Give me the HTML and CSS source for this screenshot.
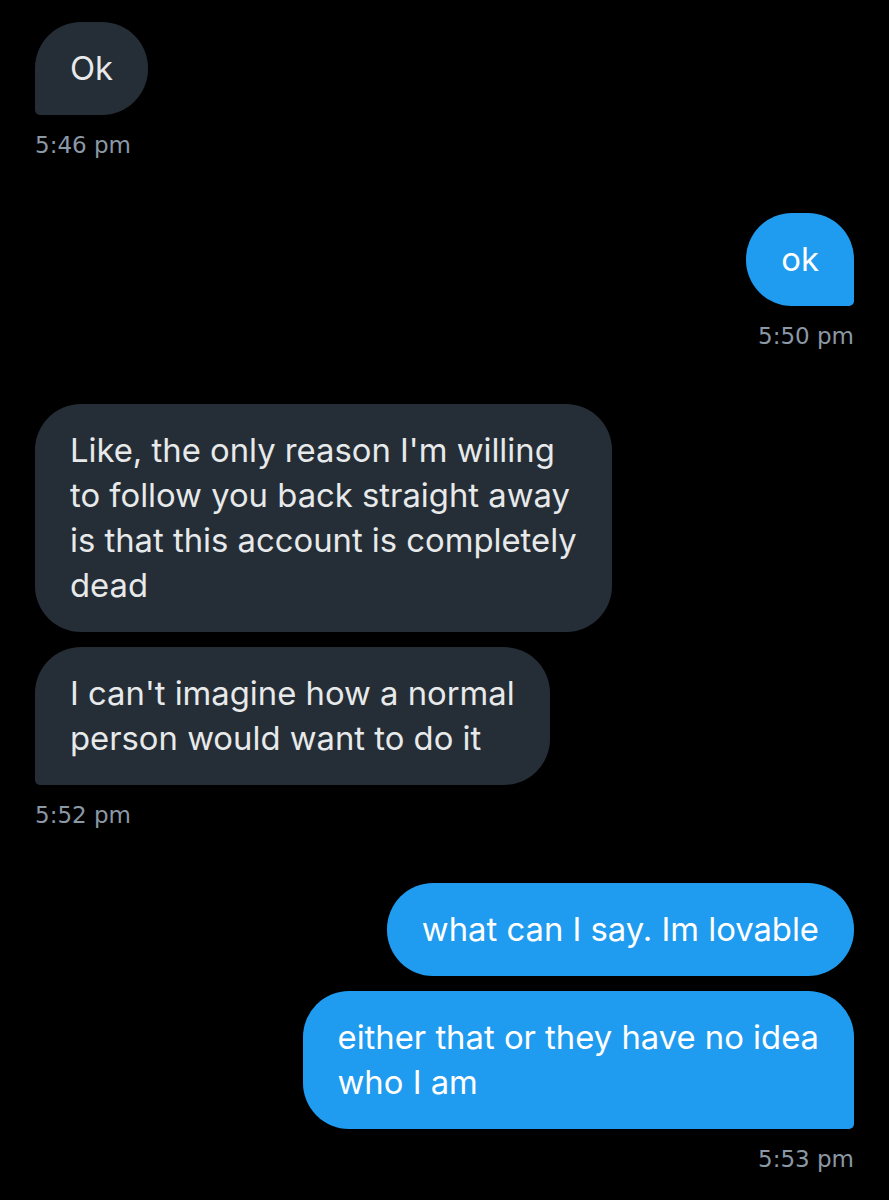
FILE: index.html
```html
<!DOCTYPE html>
<html lang="en">
<head>
<meta charset="utf-8">
<title>Messages</title>
<link rel="stylesheet" href="styles.css">
</head>
<body>
<main class="chat">
  <section class="group in">
    <div class="bubble last">Ok</div>
    <div class="time">5:46 pm</div>
  </section>
  <section class="group out">
    <div class="bubble last">ok</div>
    <div class="time">5:50 pm</div>
  </section>
  <section class="group in">
    <div class="bubble">Like, the only reason I'm willing<br>to follow you back straight away<br>is that this account is completely<br>dead</div>
    <div class="bubble last">I can't imagine how a normal<br>person would want to do it</div>
    <div class="time">5:52 pm</div>
  </section>
  <section class="group out">
    <div class="bubble">what can I say. Im lovable</div>
    <div class="bubble last">either that or they have no idea<br>who I am</div>
    <div class="time">5:53 pm</div>
  </section>
</main>
</body>
</html>
```
FILE: styles.css
```css
html, body {
  margin: 0;
  padding: 0;
  background: #000;
}
body {
  font-family: "Inter", "Roboto", "Liberation Sans", sans-serif;
}
.chat {
  display: flex;
  flex-direction: column;
  gap: 53px;
  padding: 22px 35px 0;
}
.group {
  display: flex;
  flex-direction: column;
  gap: 15px;
}
.group.in { align-items: flex-start; }
.group.out { align-items: flex-end; }
.bubble {
  font-size: 32.8px;
  line-height: 45px;
  padding: 24px 35px;
  border-radius: 46px;
  width: fit-content;
}
.in .bubble {
  background: #252e36;
  color: #e7e9ea;
}
.out .bubble {
  background: #1f9bef;
  color: #fff;
}
.in .bubble.last { border-bottom-left-radius: 5px; }
.out .bubble.last { border-bottom-right-radius: 5px; }
.time {
  font-family: "DejaVu Sans", "Liberation Sans", sans-serif;
  font-size: 23px;
  line-height: 30px;
  color: #8b98a5;
}
```
